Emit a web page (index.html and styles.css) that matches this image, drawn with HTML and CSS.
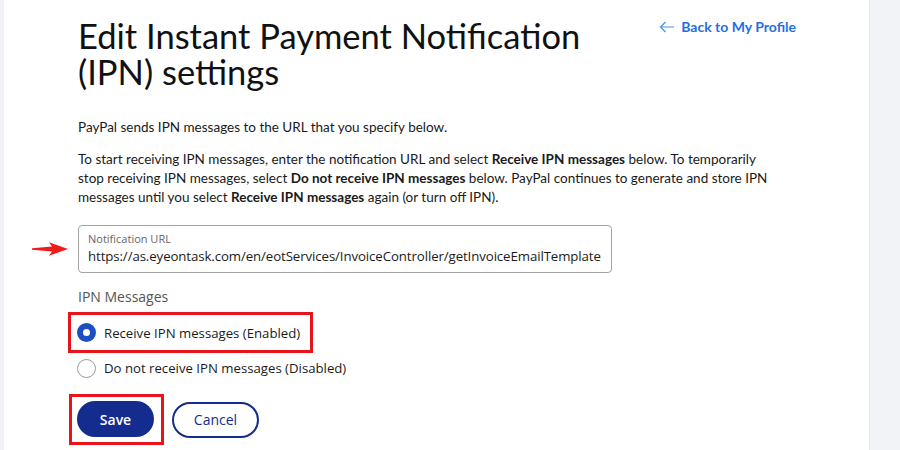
FILE: index.html
```html
<!DOCTYPE html>
<html lang="en">
<head>
<meta charset="utf-8">
<title>Edit IPN settings</title>
<link rel="stylesheet" href="styles.css">
</head>
<body>
<div class="page">
  <main class="card">
    <header class="head">
      <h1 class="title">Edit Instant Payment Notification (IPN) settings</h1>
      <a class="back" href="#"><svg class="back-icon" viewBox="0 0 16 12" width="16" height="12"><path d="M15 6H1.5M6.5 1L1.5 6l5 5" fill="none" stroke="#4a8fe8" stroke-width="1.2"/></svg>Back to My Profile</a>
    </header>
    <p class="text">PayPal sends IPN messages to the URL that you specify below.</p>
    <p class="text">To start receiving IPN messages, enter the notification URL and select <b>Receive IPN messages</b> below. To temporarily stop receiving IPN messages, select <b>Do not receive IPN messages</b> below. PayPal continues to generate and store IPN messages until you select <b>Receive IPN messages</b> again (or turn off IPN).</p>
    <div class="field-row">
      <svg class="arrow" viewBox="0 0 36 14" width="36" height="14"><path d="M0 6.2 L20 4.6 L17 0.3 L36 7 L17 13.7 L20 9.4 L0 7.8 Z" fill="#ee1c1c"/></svg>
      <div class="field">
        <span class="field-label">Notification URL</span>
        <span class="field-value">https://as.eyeontask.com/en/eotServices/InvoiceController/getInvoiceEmailTemplate</span>
      </div>
    </div>
    <div class="group-label">IPN Messages</div>
    <div class="options">
      <label class="option option-hl"><span class="radio radio-on"></span>Receive IPN messages (Enabled)</label>
      <label class="option"><span class="radio"></span>Do not receive IPN messages (Disabled)</label>
    </div>
    <div class="actions">
      <span class="hl-box"><button class="btn btn-primary">Save</button></span>
      <button class="btn btn-secondary">Cancel</button>
    </div>
  </main>
  <aside class="side"></aside>
</div>
</body>
</html>
```

FILE: styles.css
```css
* { box-sizing: border-box; }
html, body { margin: 0; padding: 0; }
body {
  width: 900px;
  height: 450px;
  overflow: hidden;
  background: #f2f3f6;
  font-family: "Lato", "Noto Sans", sans-serif;
  color: #1a1a1a;
}
.page {
  display: flex;
  height: 450px;
  padding-left: 4px;
}
.card {
  width: 865px;
  background: #fff;
  padding: 18px 0 0 74px;
}
.side { flex: 1; background: #f2f3f7; border-left: 1px solid #e8e9ee; }
.head {
  display: flex;
  justify-content: space-between;
  align-items: flex-start;
}
.title {
  margin: 0;
  width: 525px;
  font-family: "Lato", sans-serif;
  font-weight: 400;
  font-size: 34.5px;
  line-height: 36px;
  color: #111;
}
.back {
  margin: 0 73px 0 0;
  display: flex;
  align-items: center;
  gap: 6px;
  color: #1f6fe0;
  font-weight: 700;
  font-size: 14px;
  text-decoration: none;
}
.text {
  margin: 28px 0 0;
  width: 700px;
  font-size: 13.5px;
  line-height: 19px;
  color: #1a1a1a;
}
.text + .text { margin-top: 13px; }
.text b { font-weight: 700; }
.field-row {
  display: flex;
  align-items: center;
  margin: 18px 0 0 -46px;
}
.arrow { margin-right: 10px; flex: none; }
.field {
  width: 534px;
  height: 48px;
  border: 1px solid #a3a3a3;
  border-radius: 4px;
  padding: 6px 10px 0 9px;
  display: flex;
  flex-direction: column;
}
.field-label { font-size: 11px; color: #666; line-height: 14px; font-family: "Open Sans", sans-serif; }
.field-value { font-size: 13.25px; color: #1a1a1a; line-height: 20px; font-family: "Open Sans", sans-serif; letter-spacing: -0.1px; white-space: nowrap; }
.group-label {
  margin-top: 14px;
  font-size: 14px;
  color: #555;
  font-family: "Open Sans", sans-serif;
}
.options {
  margin: 6px 0 0 -10px;
  display: flex;
  flex-direction: column;
}
.option {
  display: flex;
  align-items: center;
  gap: 8px;
  width: 245px;
  height: 41px;
  padding-left: 6px;
  font-family: "Open Sans", sans-serif;
  font-size: 13.2px;
  color: #1a1a1a;
  border: 3px solid transparent;
  white-space: nowrap;
}
.option-hl { border-color: #e8141c; }
.option + .option { height: 30px; }
.radio {
  width: 19px;
  height: 19px;
  border-radius: 50%;
  border: 1px solid #999;
  flex: none;
  background: #fff;
}
.radio-on { border: 6px solid #1d4fc4; background: #fff; }
.actions {
  margin: 11px 0 0 -9px;
  display: flex;
  align-items: center;
  gap: 8px;
}
.hl-box {
  border: 3px solid #e8141c;
  padding: 4px 7px 5px 5px;
  display: flex;
}
.btn {
  height: 36px;
  border-radius: 18px;
  font-family: "Open Sans", sans-serif;
  font-size: 14px;
  font-weight: 600;
  cursor: pointer;
}
.btn-primary {
  width: 77px;
  background: #142c8e;
  color: #fff;
  border: none;
}
.btn-secondary {
  width: 87px;
  background: #fff;
  color: #142c8e;
  border: 2px solid #142c8e;
  font-weight: 500;
}
```
